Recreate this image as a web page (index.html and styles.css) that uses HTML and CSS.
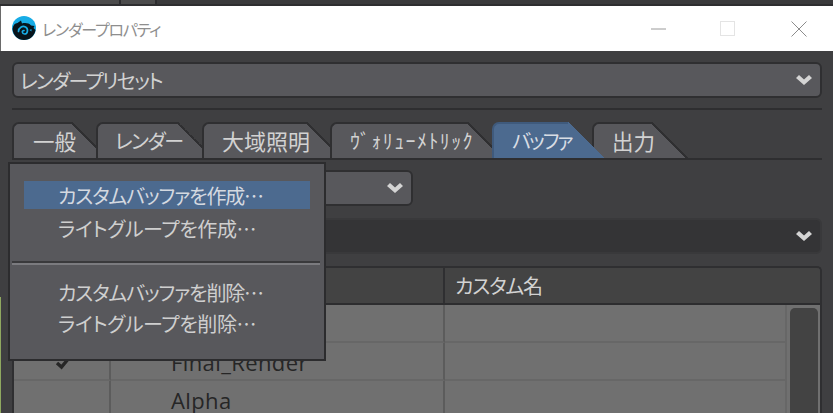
FILE: index.html
```html
<!DOCTYPE html>
<html lang="ja">
<head>
<meta charset="utf-8">
<title>レンダープロパティ</title>
<link rel="stylesheet" href="styles.css">
</head>
<body>
<div class="page">
  <div class="topstrip"><span class="seg seg-a"></span><span class="seg seg-b"></span><span class="seg seg-c"></span></div>
  <div class="window">
    <header class="titlebar">
      <svg class="appicon" width="24" height="24" viewBox="0 0 24 24">
        <circle cx="12" cy="12" r="12" fill="#17ace6"/>
        <path d="M0.500 13C1 9 3 7 5.500 7L9 4.500L10 7.500C13 6.500 17 7 19 9.500L22.500 10L21.500 12L23.500 14C22.500 20 18 24 12 24C6 24 1 19.500 0.500 13Z" fill="#07141c"/>
        <path d="M6.500 15.500C6.500 11.500 10.500 9.500 13.500 11C16.500 12.500 16 18 12.500 18C10 18 9.500 14.500 12 14.500" fill="none" stroke="#17ace6" stroke-width="1.700" stroke-linecap="round"/>
        <path d="M17.500 14L19.500 13L19.500 15.500Z" fill="#17ace6"/>
      </svg>
      <span class="wintitle">レンダープロパティ</span>
      <div class="winctrls">
        <svg width="16" height="16" viewBox="0 0 16 16"><path d="M0 8H15" stroke="#9a9a9a"/></svg>
        <svg width="16" height="16" viewBox="0 0 16 16"><rect x="0.500" y="0.500" width="14" height="14" fill="none" stroke="#e4e4e4"/></svg>
        <svg class="closeicon" width="16" height="16" viewBox="0 0 16 16"><path d="M0.500 0.500L15.500 15.500M15.500 0.500L0.500 15.500" stroke="#8c8c8c" fill="none"/></svg>
      </div>
    </header>
    <main class="content">
      <div class="select preset"><span class="presetlabel">レンダープリセット</span>
        <svg class="chev" width="16" height="10" viewBox="0 0 16 10"><path d="M0 3L3 0L8 4.500L13 0L16 3L8 10Z" fill="#d4d4d4"/></svg>
      </div>
      <div class="rule"></div>
      <nav class="tabs">
        <div class="tab t1"><span class="tablabel">一般</span><i class="corner"></i></div>
        <div class="tab t2"><span class="tablabel">レンダー</span><i class="corner"></i></div>
        <div class="tab t3"><span class="tablabel">大域照明</span><i class="corner"></i></div>
        <div class="tab t4"><span class="tablabel">ｳﾞｫﾘｭｰﾒﾄﾘｯｸ</span><i class="corner"></i></div>
        <div class="tab t5 active"><span class="tablabel">バッファ</span><i class="corner"></i></div>
        <div class="tab t6"><span class="tablabel">出力</span><i class="corner"></i></div>
      </nav>
      <div class="select short">
        <svg class="chev" width="16" height="10" viewBox="0 0 16 10"><path d="M0 3L3 0L8 4.500L13 0L16 3L8 10Z" fill="#d4d4d4"/></svg>
      </div>
      <div class="select dark">
        <svg class="chev" width="16" height="10" viewBox="0 0 16 10"><path d="M0 3L3 0L8 4.500L13 0L16 3L8 10Z" fill="#d4d4d4"/></svg>
      </div>
      <section class="table">
        <div class="thead">
          <div class="th"></div><div class="th"></div><div class="th">カスタム名</div>
        </div>
        <div class="tbody">
          <div class="grid">
            <div class="td"></div><div class="td"></div><div class="td"></div>
            <div class="td check"><svg width="16" height="14" viewBox="0 0 16 14"><path d="M2 7L6.500 11L14 2" fill="none" stroke="#262626" stroke-width="3.400"/></svg></div><div class="td">Final_Render</div><div class="td"></div>
            <div class="td"></div><div class="td">Alpha</div><div class="td"></div>
          </div>
          <div class="scroll"><div class="thumb"></div></div>
        </div>
      </section>
    </main>
  </div>
  <div class="menu">
    <div class="mi hi">カスタムバッファを作成…</div>
    <div class="mi wide">ライトグループを作成…</div>
    <div class="msep"></div>
    <div class="mi mi3">カスタムバッファを削除…</div>
    <div class="mi wide">ライトグループを削除…</div>
  </div>
</div>
</body>
</html>
```
FILE: styles.css
```css
* { box-sizing: border-box; }
html, body { margin: 0; height: 100%; overflow: hidden; background: #3f3f41; }
body { font-family: "Noto Sans CJK JP", "Noto Sans", sans-serif; font-feature-settings: "palt"; color: #d2d2d2; }
.page { width: 833px; height: 413px; overflow: hidden; position: relative; background: linear-gradient(#6a6a6a 0, #6a6a6a 51px, #3f3f41 51px, #3f3f41 297px, #8fa860 297px); }
.topstrip { height: 6px; display: flex; background: #3c3c3e; border-bottom: 2px solid #2e2e30; }
.seg { height: 4px; border-right: 2px solid #2c2c2e; background: #4c4c4c; }
.seg-a { width: 121px; }
.seg-b { width: 36px; }
.seg-c { flex: 1; border-right: 0; background: #3a3a3c; }
.window { margin-left: 1px; height: 407px; background: #3f3f41; display: flex; flex-direction: column; }
.titlebar { height: 45px; flex: none; background: #fff; display: flex; align-items: center; padding-left: 11px; }
.appicon { flex: none; margin-top: -2px; }
.wintitle { font-size: 16px; color: #8e8e8e; margin-left: 6px; letter-spacing: -1.200px; }
.winctrls { margin-left: auto; display: flex; gap: 53px; padding-right: 26px; }
.closeicon { margin-left: 2px; }
.content { padding: 11px 11px 0; display: flex; flex-direction: column; flex: 1; min-height: 0; }
.select { height: 36px; flex: none; border: 2px solid #2f2f31; border-radius: 6px; background: #58585c; display: flex; align-items: center; justify-content: space-between; padding: 0 8px 0 6px; }
.presetlabel { font-size: 20px; letter-spacing: -1.700px; }
.chev { margin-left: auto; }
.rule { height: 2px; margin: 10px 0 12px; flex: none; background: #2e2e30; }
.tabs { height: 38px; flex: none; display: flex; border-bottom: 2px solid #2e2e30; }
.tab { height: 36px; display: flex; margin-right: -12px; position: relative; }
.tablabel { display: flex; align-items: center; position: relative; z-index: 1; padding-bottom: 2px; background: #58585c; border: 2px solid #2f2f31; border-width: 2px 0 0 2px; border-radius: 7px 0 0 0; font-size: 20px; letter-spacing: -1px; white-space: nowrap; }
.corner { display: block; width: 36px; height: 36px; background: linear-gradient(to top right, #58585c calc(50% - 1.500px), #2f2f31 calc(50% - 1.500px), #2f2f31 50%, transparent 50%); }
.t1 .tablabel { width: 60px; padding-left: 19px; font-size: 21.500px; letter-spacing: 0; }
.t2 .tablabel { width: 82px; padding-left: 17px; letter-spacing: -1.400px; }
.t3 .tablabel { width: 105px; padding-left: 18px; font-size: 22px; letter-spacing: 0; }
.t4 .tablabel { width: 138px; padding-left: 18px; letter-spacing: 1.400px; }
.t3 { margin-right: -13px; }
.t5 .tablabel { width: 76px; padding-left: 18px; letter-spacing: -2px; }
.t6 .tablabel { width: 60px; padding-left: 18px; font-size: 21.500px; letter-spacing: 0; }
.active { z-index: 2; }
.active .tablabel { background: #4c6a8f; border-color: #3f5a7c; color: #d8dde4; }
.active .corner { background: linear-gradient(to top right, #4c6a8f 50%, transparent 50%); }
.short { width: 401px; margin-top: 10px; }
.dark { margin-top: 12px; background: #343436; border-color: #39393b; }
.table { margin-top: 12px; flex: 1; min-height: 0; border: 2px solid #2f2f31; border-bottom: 0; border-radius: 5px 5px 0 0; overflow: hidden; width: 810px; }
.thead { height: 37px; display: grid; grid-template-columns: 97px 334px 1fr; background: #434343; border-bottom: 2px solid #2d2d2f; }
.th { display: flex; align-items: center; padding-left: 10px; font-size: 20px; letter-spacing: -1.200px; border-right: 2px solid #2f2f31; }
.th:last-child { border-right: 0; }
.tbody { display: flex; background: #707070; height: 120px; }
.grid { width: 773px; flex: none; display: grid; grid-template-columns: 97px 334px 1fr; grid-auto-rows: 38px; border-right: 2px solid #676767; align-content: start; }
.td { display: flex; align-items: center; padding-left: 60px; padding-top: 1px; font-family: "Open Sans", sans-serif; font-size: 22px; letter-spacing: 0.400px; color: #262626; border-bottom: 2px solid #676767; border-right: 2px solid #5c5c5c; }
.grid .td:nth-child(3n) { border-right: 0; }
.check { padding-left: 41px; padding-top: 3px; }
.scroll { flex: 1; padding: 3px 2px 0 3px; }
.thumb { height: 120px; background: #434343; border-radius: 5px 5px 0 0; }
.menu { position: absolute; left: 8px; top: 162px; width: 318px; height: 199px; background: #58585c; border: 2px solid #2c2c2e; padding: 17px 14px 0; font-size: 20px; letter-spacing: -1.150px; }
.mi { height: 28px; margin-bottom: 5px; padding-left: 34px; display: flex; align-items: center; white-space: nowrap; color: #cfcfcf; }
.wide { letter-spacing: -0.400px; }
.hi { background: #4c6a8f; color: #d4d9e0; }
.msep { height: 4px; margin: 19px -10px 13px -12px; background: linear-gradient(#3a3a3c 0, #3a3a3c 2px, #7b7b7f 2px); }
.mi3 { margin-bottom: 3px; }
```
